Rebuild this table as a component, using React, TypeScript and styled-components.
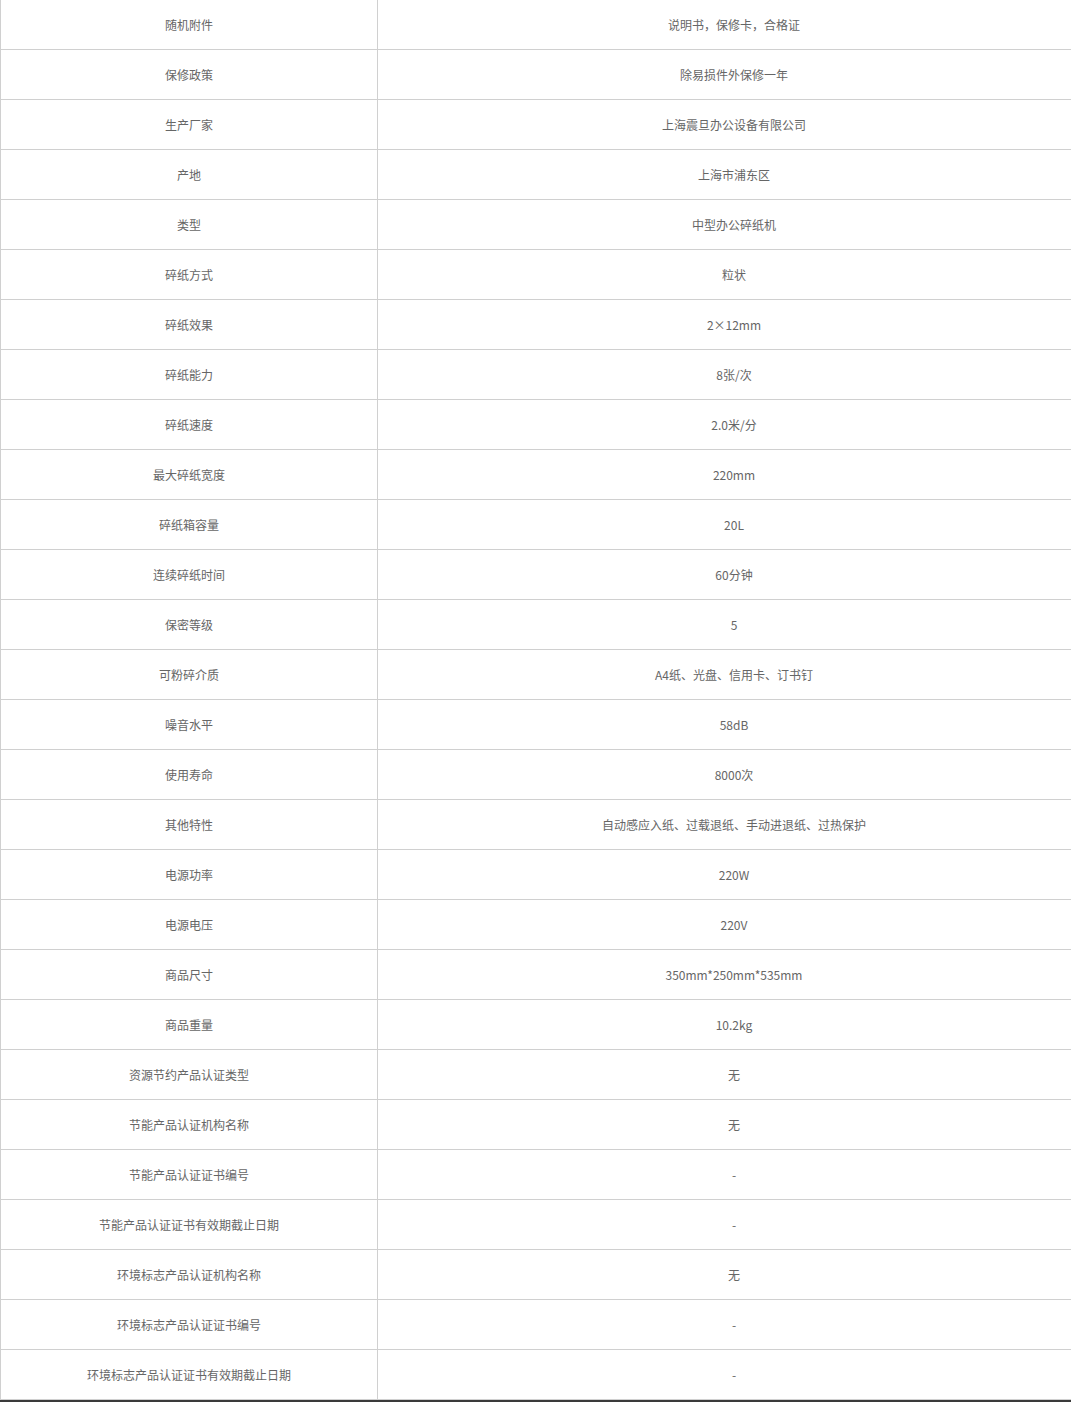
import * as React from 'react';
import styled, { createGlobalStyle } from 'styled-components';

const GlobalStyle = createGlobalStyle`
  html, body {
    margin: 0;
    padding: 0;
    background: #fff;
    overflow: hidden;
  }
  body {
    font-family: "Noto Sans CJK SC", "Noto Sans", sans-serif;
  }
`;

const Page = styled.div`
  width: 1090px;
`;

const SpecTable = styled.div`
  display: flex;
  flex-direction: column;
  border-left: 1px solid #d0d0d0;
`;

const Row = styled.div`
  display: grid;
  grid-template-columns: 377px 1fr;
  height: 49px;
  border-bottom: 1px solid #d0d0d0;
`;

const Cell = styled.div<{ $label?: boolean }>`
  display: flex;
  align-items: center;
  justify-content: center;
  font-size: 12px;
  line-height: 16px;
  color: #666;
  border-right: ${p => (p.$label ? '1px solid #d0d0d0' : 'none')};
`;

const Footer = styled.div`
  height: 4px;
  background: #3a3a3a;
`;

const SPECS: [string, string][] = [
  ['随机附件', '说明书，保修卡，合格证'],
  ['保修政策', '除易损件外保修一年'],
  ['生产厂家', '上海震旦办公设备有限公司'],
  ['产地', '上海市浦东区'],
  ['类型', '中型办公碎纸机'],
  ['碎纸方式', '粒状'],
  ['碎纸效果', '2×12mm'],
  ['碎纸能力', '8张/次'],
  ['碎纸速度', '2.0米/分'],
  ['最大碎纸宽度', '220mm'],
  ['碎纸箱容量', '20L'],
  ['连续碎纸时间', '60分钟'],
  ['保密等级', '5'],
  ['可粉碎介质', 'A4纸、光盘、信用卡、订书钉'],
  ['噪音水平', '58dB'],
  ['使用寿命', '8000次'],
  ['其他特性', '自动感应入纸、过载退纸、手动进退纸、过热保护'],
  ['电源功率', '220W'],
  ['电源电压', '220V'],
  ['商品尺寸', '350mm*250mm*535mm'],
  ['商品重量', '10.2kg'],
  ['资源节约产品认证类型', '无'],
  ['节能产品认证机构名称', '无'],
  ['节能产品认证证书编号', '-'],
  ['节能产品认证证书有效期截止日期', '-'],
  ['环境标志产品认证机构名称', '无'],
  ['环境标志产品认证证书编号', '-'],
  ['环境标志产品认证证书有效期截止日期', '-'],
];

export default function App() {
  return (
    <Page>
      <GlobalStyle />
      <SpecTable>
        {SPECS.map(([label, value]) => (
          <Row key={label}>
            <Cell $label>{label}</Cell>
            <Cell>{value}</Cell>
          </Row>
        ))}
      </SpecTable>
      <Footer />
    </Page>
  );
}
